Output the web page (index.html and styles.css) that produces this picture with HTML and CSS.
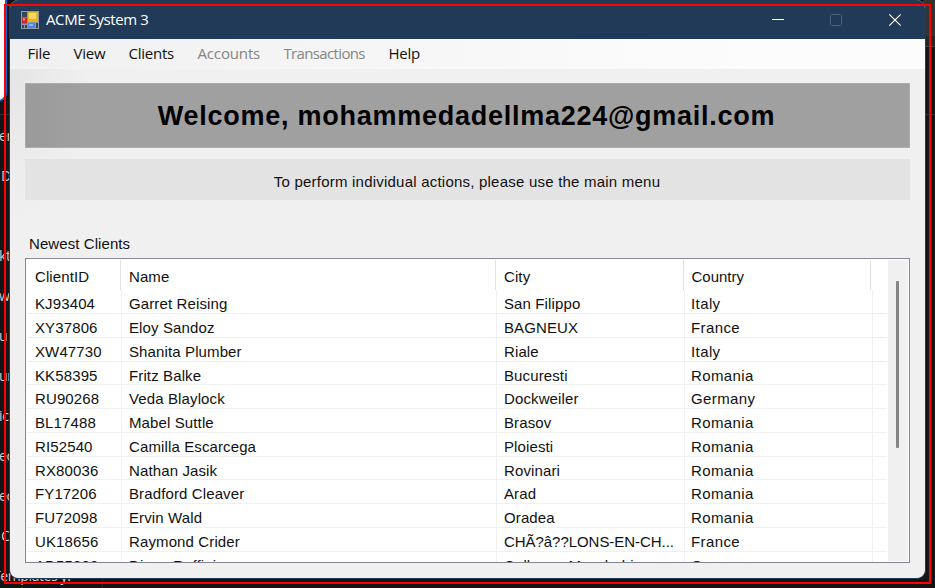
FILE: index.html
```html
<!DOCTYPE html>
<html lang="en">
<head>
<meta charset="utf-8">
<title>ACME System 3</title>
<link rel="stylesheet" href="styles.css">
</head>
<body>
<div class="backdrop">
  <div class="white-card"></div>
  <ul class="side">
    <li>er</li><li class="in">D</li><li></li><li>kt</li><li>wr</li><li>u</li><li>ur</li><li>ic</li><li>ec</li><li>ec</li><li class="in">C</li><li class="last">Templates y.</li>
  </ul>
  <div class="right-panel"></div>
</div>
<main class="window">
  <header class="titlebar">
    <svg class="app-icon" width="18" height="18" viewBox="0 0 18 18">
      <rect width="18" height="18" fill="#8d9aa6"/>
      <rect x="1" y="1" width="5" height="5" fill="#34475b"/>
      <rect x="1" y="6.5" width="5" height="6" fill="#c62828"/><rect x="2" y="7.5" width="2" height="2" fill="#f49a8c"/>
      <rect x="1" y="14" width="2" height="3" fill="#34475b"/><rect x="4" y="14" width="2" height="3" fill="#34475b"/>
      <rect x="7" y="1" width="10" height="10" fill="#e9b326"/><rect x="8" y="2" width="7" height="6" fill="#ffda62"/>
      <rect x="7" y="12" width="7" height="5" fill="#4c86e8"/><rect x="8" y="13" width="4" height="2" fill="#8bb6fa"/>
      <rect x="15" y="12" width="2" height="5" fill="#34475b"/>
    </svg>
    <span class="title">ACME System 3</span>
    <svg class="controls" width="130" height="14" viewBox="0 0 130 14" fill="none">
      <path d="M0 6.5H12" stroke="#fff"/>
      <rect x="58.5" y="1.5" width="11" height="11" rx="1" stroke="#4c6177"/>
      <path d="M117.3 1.3L128.7 12.7M128.7 1.3L117.3 12.7" stroke="#fff" stroke-width="1.2"/>
    </svg>
  </header>
  <nav class="menu">
    <span class="m-file">File</span><span class="m-view">View</span><span class="m-clients">Clients</span><span class="m-accounts off">Accounts</span><span class="m-trans off">Transactions</span><span class="m-help">Help</span>
  </nav>
  <section class="content">
    <h1 class="welcome">Welcome, mohammedadellma224@gmail.com</h1>
    <p class="hint">To perform individual actions, please use the main menu</p>
    <h2 class="caption">Newest Clients</h2>
    <div class="list">
      <div class="grid">
        <div class="row head"><span>ClientID</span><span>Name</span><span>City</span><span>Country</span></div>
        <div class="row"><span>KJ93404</span><span>Garret Reising</span><span>San Filippo</span><span>Italy</span></div>
        <div class="row"><span>XY37806</span><span>Eloy Sandoz</span><span>BAGNEUX</span><span>France</span></div>
        <div class="row"><span>XW47730</span><span>Shanita Plumber</span><span>Riale</span><span>Italy</span></div>
        <div class="row"><span>KK58395</span><span>Fritz Balke</span><span>Bucuresti</span><span>Romania</span></div>
        <div class="row"><span>RU90268</span><span>Veda Blaylock</span><span>Dockweiler</span><span>Germany</span></div>
        <div class="row"><span>BL17488</span><span>Mabel Suttle</span><span>Brasov</span><span>Romania</span></div>
        <div class="row"><span>RI52540</span><span>Camilla Escarcega</span><span>Ploiesti</span><span>Romania</span></div>
        <div class="row"><span>RX80036</span><span>Nathan Jasik</span><span>Rovinari</span><span>Romania</span></div>
        <div class="row"><span>FY17206</span><span>Bradford Cleaver</span><span>Arad</span><span>Romania</span></div>
        <div class="row"><span>FU72098</span><span>Ervin Wald</span><span>Oradea</span><span>Romania</span></div>
        <div class="row"><span>UK18656</span><span>Raymond Crider</span><span class="long">CHÃ?â??LONS-EN-CH...</span><span>France</span></div>
        <div class="row"><span>AD55800</span><span>Diann Ruffini</span><span>Colleges-Meschabi</span><span>Germany</span></div>
      </div>
      <div class="scroll"><div class="thumb"></div></div>
    </div>
  </section>
</main>
<div class="frame"></div>
</body>
</html>
```

FILE: styles.css
```css
* { box-sizing: border-box; }
body { margin: 0; width: 935px; height: 588px; overflow: hidden; position: relative; background: #141414; font: 15px/20px "Liberation Sans", Arial, sans-serif; color: #111; }
.backdrop { position: absolute; inset: 0; overflow: hidden; background: #141414; }
.white-card { position: absolute; left: -20px; top: -20px; width: 27px; height: 122px; background: #fff; border: 2px solid #0a62d0; border-radius: 0 0 9px 0; }
.side { position: absolute; left: 0; top: 114px; margin: 0; padding: 0; list-style: none; color: #d0d0d0; font: 14px/42px "Open Sans", sans-serif; letter-spacing: -0.4px; white-space: nowrap; width: 103px; height: 474px; border-top: 1px solid #303030; border-right: 1px solid #252525; }
.side li { height: 40px; margin-left: -1px; }
.side li.in { margin-left: 1px; }
.side li.last { margin-left: -7px; }
.right-panel { position: absolute; right: 0; top: 0; width: 12px; height: 47px; background: linear-gradient(#343434 36px, #262626 36px); border-bottom: 1px solid #444; }
.right-panel::after { content: ""; position: absolute; top: 114px; width: 12px; height: 1px; background: #333; }
.window { position: absolute; left: 9px; top: 0; width: 917px; height: 579px; background: #f0f0f0; border: 1px solid #203a57; border-top: 0; border-radius: 9px; overflow: hidden; }
.titlebar { height: 39px; display: flex; align-items: center; background: #203a57; padding-left: 11px; color: #fff; }
.title { margin-left: 7px; font: 15px/20px "Open Sans", sans-serif; letter-spacing: -0.4px; padding-bottom: 2px; }
.controls { margin-left: auto; margin-right: 23px; }
.menu { height: 30px; display: flex; align-items: center; padding: 0 0 2px 17.5px; background: linear-gradient(90deg, #f0f0f0, #fcfcfc 80%); font: 15px/20px "Open Sans", sans-serif; white-space: nowrap; }
.menu span { letter-spacing: -0.25px; }
.menu .off { color: #858585; }
.menu .m-accounts { letter-spacing: -0.15px; }
.menu .m-trans { letter-spacing: -0.65px; }
.m-file { width: 46px; } .m-view { width: 55px; } .m-clients { width: 69px; } .m-accounts { width: 86px; } .m-trans { width: 105px; }
.content { padding: 14px 15px 0; background: radial-gradient(ellipse 80px 150px at 0 0, #e5e5e5, #f0f0f0); }
.welcome { margin: 0; height: 65px; background: linear-gradient(90deg, #9a9a9a, #a0a0a0 60px); border: 1px solid #acacac; text-align: center; font: bold 27px/65px "Liberation Sans", Arial, sans-serif; letter-spacing: 0.74px; text-indent: -2px; color: #000; white-space: nowrap; }
.hint { margin: 11px 0 0; height: 41px; background: #e3e3e3; text-align: center; line-height: 45px; letter-spacing: 0.22px; text-indent: -1px; white-space: nowrap; }
.caption { margin: 34px 0 0 4px; font-size: 15px; font-weight: 400; line-height: 20px; letter-spacing: 0.08px; white-space: nowrap; }
.list { margin-top: 4px; height: 305px; border: 1px solid #828790; background: #fff; padding: 1px; display: flex; overflow: hidden; }
.grid { width: 860px; flex: none; }
.row { display: grid; grid-template-columns: 95px 375px 187.5px 188px; height: 23.77px; line-height: 27px; border-bottom: 1px solid #f0f0f0; letter-spacing: 0.12px; white-space: nowrap; }
.row span { height: 23.77px; border-right: 1px solid #f0f0f0; padding-left: 7px; }
.row span:nth-child(4) { letter-spacing: 0.4px; padding-left: 6.5px; }
.row span:first-child { padding-left: 8px; }
.row .long { letter-spacing: -0.05px; }
.head { height: 30.3px; line-height: 33px; border: 0; grid-template-columns: 94px 375px 187.5px 187.5px; letter-spacing: 0.1px; }
.head span { height: 30px; border-color: #e2e2e2; }
.head span:not(:first-child) { padding-left: 8px; }
.head span:nth-child(4) { letter-spacing: 0; }
.scroll { margin-left: 1px; width: 20px; background: #f0f0f0; }
.thumb { width: 3px; height: 167px; margin: 21px 0 0 8px; background: #858585; border-radius: 1px; }
.frame { position: absolute; left: 4px; top: 4px; width: 927px; height: 580px; border: 2px solid #f00; }
```
